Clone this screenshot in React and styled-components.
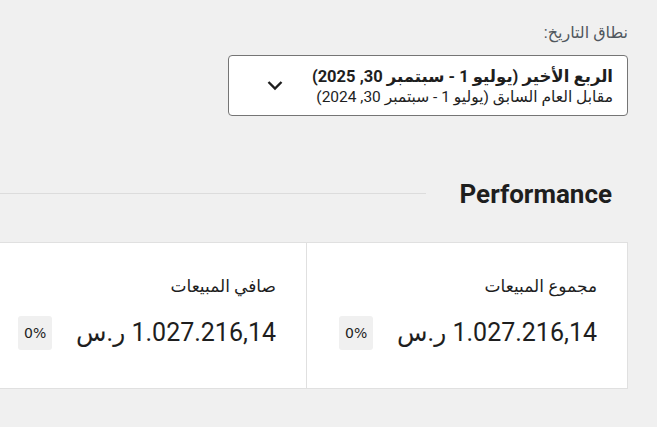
import React from 'react'
import styled, { createGlobalStyle } from 'styled-components'

const GlobalStyle = createGlobalStyle`
  html, body {
    margin: 0;
    background: #f0f0f0;
    font-family: Roboto, "DejaVu Sans", sans-serif;
    color: #1e1e1e;
    overflow: hidden;
  }
`

const ChevronDown = () => (
  <svg width="16" height="11" viewBox="0 0 16 11" aria-hidden="true">
    <polyline points="1.5,2 8,8.5 14.5,2" fill="none" stroke="#1e1e1e" strokeWidth="2.4" />
  </svg>
)

const summary = [
  { label: 'مجموع المبيعات', value: '1.027.216,14 ر.س', delta: '0%' },
  { label: 'صافي المبيعات', value: '1.027.216,14 ر.س', delta: '0%' },
]

const App = () => {
  return (
    <>
      <GlobalStyle />
      <Page dir="rtl">
        <Filters>
          <FilterLabel>نطاق التاريخ:</FilterLabel>
          <DateButton type="button">
            <DateText>
              <DateTitle>الربع الأخير (يوليو 1 - سبتمبر 30, 2025)</DateTitle>
              <DateCompare>مقابل العام السابق (يوليو 1 - سبتمبر 30, 2024)</DateCompare>
            </DateText>
            <ChevronDown />
          </DateButton>
        </Filters>

        <SectionHeader>
          <h2>Performance</h2>
          <Rule />
        </SectionHeader>

        <SummaryList>
          {summary.map((item, i) => (
            <SummaryItem key={i}>
              <ItemLabel>{item.label}</ItemLabel>
              <ItemData>
                <ItemValue>{item.value}</ItemValue>
                <Delta dir="ltr">{item.delta}</Delta>
              </ItemData>
            </SummaryItem>
          ))}
        </SummaryList>
      </Page>
    </>
  )
}

const Page = styled.div`
  direction: rtl;
  padding: 21px 29px 0 0;
  width: 657px;
  height: 427px;
  box-sizing: border-box;
`

const Filters = styled.div`
  display: flex;
  flex-direction: column;
  align-items: flex-start;
`

const FilterLabel = styled.div`
  font-size: 16px;
  color: #50575e;
  line-height: 24px;
  margin-bottom: 10px;
`

const DateButton = styled.button`
  display: flex;
  align-items: center;
  justify-content: space-between;
  width: 400px;
  height: 61px;
  box-sizing: border-box;
  padding: 0 14px 0 38px;
  background: #fff;
  border: 1px solid #757575;
  border-radius: 4px;
  font-family: inherit;
  text-align: right;
  direction: rtl;
  cursor: pointer;
`

const DateText = styled.div`
  display: flex;
  flex-direction: column;
  gap: 1px;
  margin-top: 2px;
`

const DateTitle = styled.span`
  font-size: 16.5px;
  line-height: 20px;
  font-weight: 700;
  color: #1e1e1e;
`

const DateCompare = styled.span`
  font-size: 15.5px;
  line-height: 19px;
  color: #1e1e1e;
`

const SectionHeader = styled.div`
  display: flex;
  align-items: center;
  margin-top: 62px;
  padding-right: 16px;

  h2 {
    margin: 0 0 0 34px;
    font-family: Roboto, "Liberation Sans", sans-serif;
    font-size: 26px;
    font-weight: 700;
    line-height: 32px;
    color: #1e1e1e;
    white-space: nowrap;
  }
`

const Rule = styled.div`
  flex: 1;
  height: 1px;
  background: #dcdcdc;
  margin-top: -2px;
`

const SummaryList = styled.div`
  display: flex;
  margin-top: 32px;
`

const SummaryItem = styled.div`
  flex: 0 0 321px;
  box-sizing: border-box;
  height: 147px;
  background: #fff;
  border: 1px solid #e0e0e0;
  border-left: none;
  padding: 31px 30px 0 32px;
  display: flex;
  flex-direction: column;
  gap: 18px;
`

const ItemLabel = styled.div`
  font-size: 17px;
  line-height: 24px;
  color: #1e1e1e;
`

const ItemData = styled.div`
  display: flex;
  align-items: center;
  justify-content: space-between;
`

const ItemValue = styled.div`
  font-size: 25px;
  line-height: 34px;
  color: #1e1e1e;
`

const Delta = styled.div`
  background: #f0f0f0;
  border-radius: 3px;
  font-family: "DejaVu Sans", sans-serif;
  font-size: 14px;
  line-height: 20px;
  padding: 7px 6px;
  color: #1e1e1e;
`

export default App
